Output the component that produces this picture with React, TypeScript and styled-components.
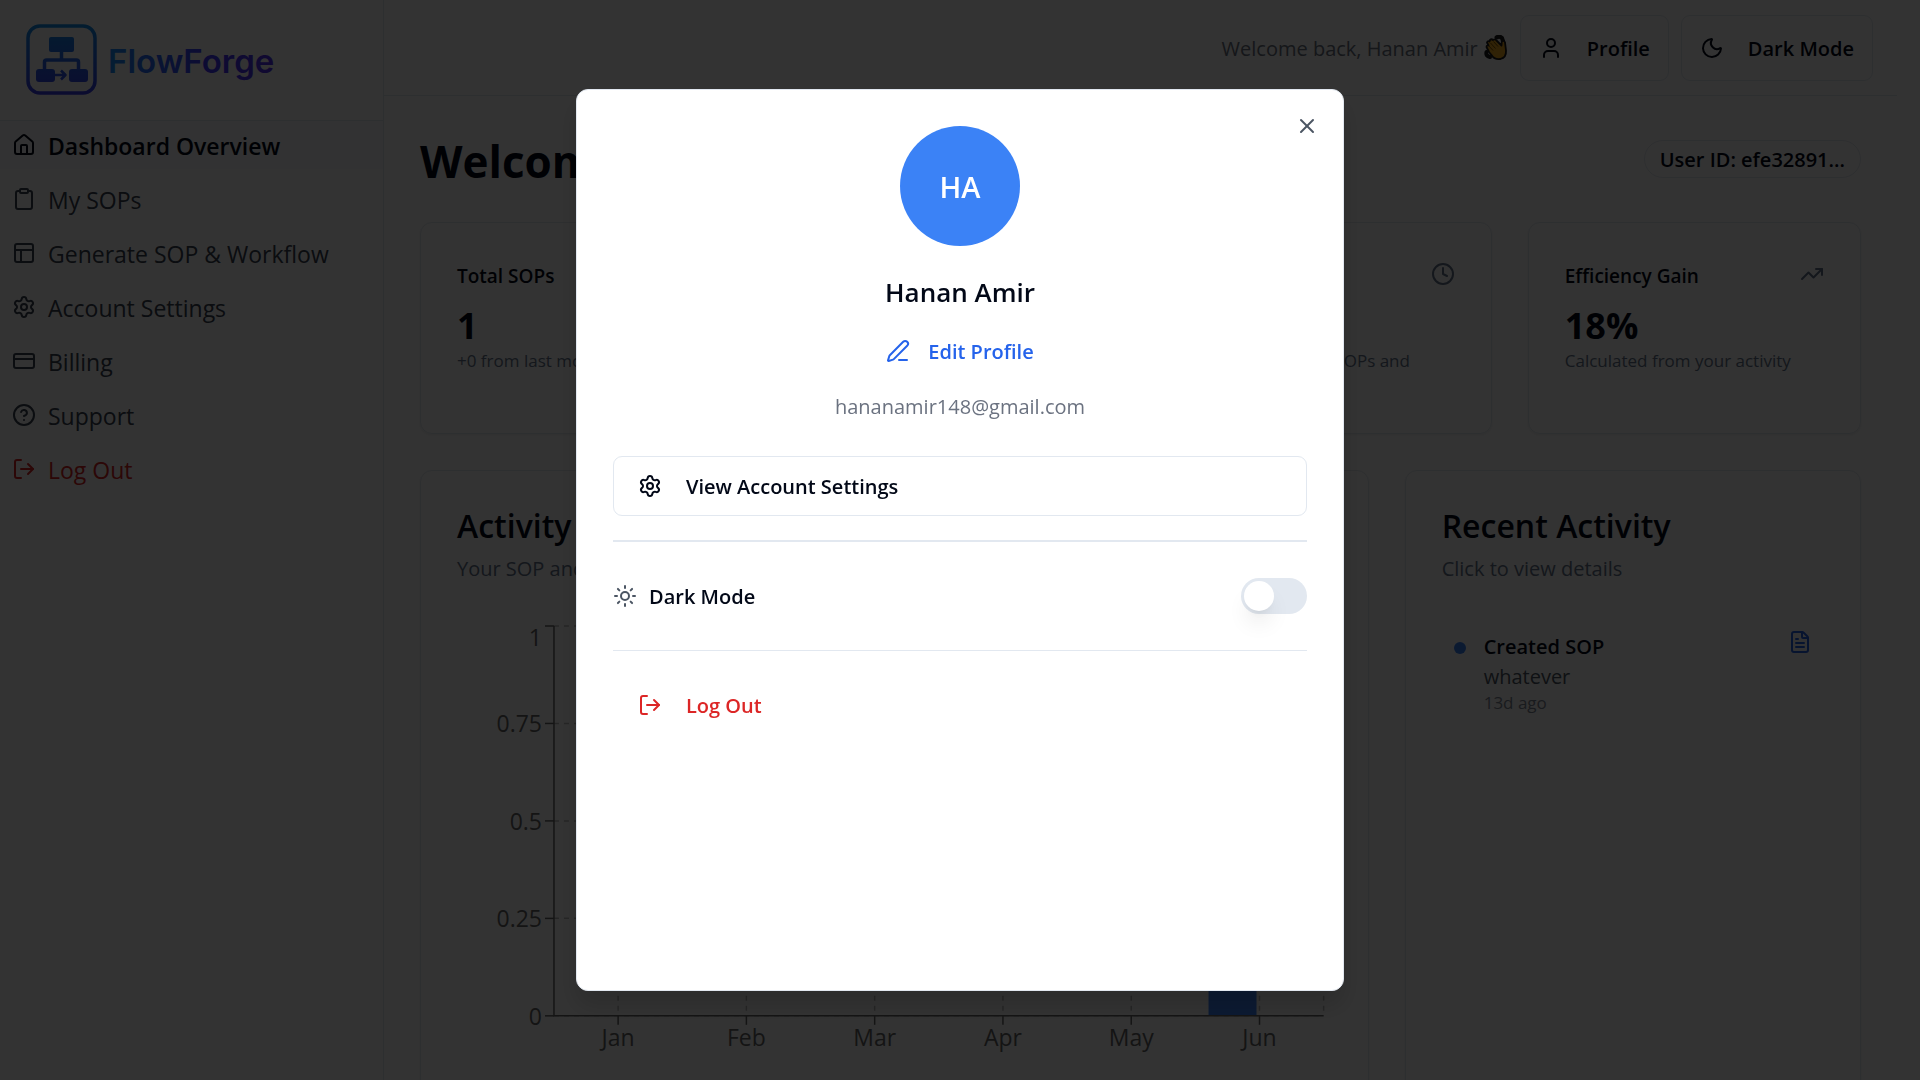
import React, { useId, useState } from "react";
import styled, { createGlobalStyle, css } from "styled-components";
import {
  House, Clipboard, PanelsTopLeft, Settings, CreditCard, CircleHelp, LogOut, User, Moon,
  Sun, Clock, TrendingUp, FileText, PenLine, X, CircleCheck, Workflow,
} from "lucide-react";

const c = {
  ink: "#020817",
  nav: "#374151",
  muted: "#64748b",
  gray: "#6b7280",
  soft: "#4b5563",
  line: "#e2e8f0",
  blue: "#3b82f6",
  link: "#2563eb",
  red: "#dc2626",
};

const GlobalStyle = createGlobalStyle`
  *, *::before, *::after { box-sizing: border-box; }
  body {
    margin: 0;
    color: ${c.ink};
    background: #fff;
    font-family: "Open Sans", "Noto Sans", sans-serif;
    font-size: 20px;
    line-height: 30px;
  }
  h1, h2, h3, p, ul { margin: 0; padding: 0; }
  ul { list-style: none; }
  button { font: inherit; color: inherit; background: none; border: 0; padding: 0; cursor: pointer; }
  a { color: inherit; text-decoration: none; }
  svg { flex: none; }
`;

const Shell = styled.div`
  display: flex;
  height: 100vh;
  overflow: hidden;
  padding-right: 23px;
`;

const Sidebar = styled.aside`
  flex: none;
  width: 384px;
  border-right: 1px solid ${c.line};
`;

const Brand = styled.div`
  display: flex;
  align-items: center;
  gap: 10px;
  height: 121px;
  padding: 0 26px;
  border-bottom: 1px solid ${c.line};
`;

const Nav = styled.nav`
  display: grid;
  gap: 6px;
`;

const Label = styled.span`
  padding-top: 2px;
`;

const NavItem = styled.a<{ $active?: boolean; $danger?: boolean }>`
  display: flex;
  align-items: center;
  gap: 12px;
  height: 48px;
  padding: 0 12px;
  font-size: 23px;
  color: ${(p) => (p.$danger ? c.red : p.$active ? c.ink : c.nav)};
  ${(p) => p.$active && css`
    font-weight: 600;
    background: #f8fafc;
  `}
`;

const Main = styled.div`
  flex: 1;
  min-width: 0;
`;

const TopBar = styled.header`
  display: flex;
  align-items: center;
  justify-content: flex-end;
  gap: 12px;
  height: 96px;
  padding: 0 24px;
  border-bottom: 1px solid ${c.line};
`;

const Greeting = styled.p`
  display: flex;
  align-items: center;
  gap: 6px;
  color: ${c.gray};
`;

const BarButton = styled.button`
  display: flex;
  align-items: center;
  gap: 24px;
  height: 66px;
  padding: 0 18px;
  border: 1px solid ${c.line};
  border-radius: 9px;
  font-weight: 600;
`;

const Content = styled.main`
  display: grid;
  gap: 36px;
  padding: 36px;
`;

const TitleRow = styled.div`
  display: flex;
  align-items: center;
  justify-content: space-between;
  height: 54px;
`;

const PageTitle = styled.h1`
  padding-top: 4px;
  font-size: 44px;
  line-height: 54px;
  font-weight: 700;
`;

const Badge = styled.span`
  padding: 4px 15px 2px;
  border: 1px solid ${c.line};
  border-radius: 19px;
  font-weight: 600;
`;

const Stats = styled.div`
  display: grid;
  grid-template-columns: repeat(4, 1fr);
  gap: 36px;
`;

const Panels = styled.div`
  display: grid;
  grid-template-columns: repeat(3, 1fr);
  gap: 36px;
`;

const Card = styled.section<{ $span?: number }>`
  grid-column: span ${(p) => p.$span ?? 1};
  min-width: 0;
  padding: 36px;
  border: 1px solid ${c.line};
  border-radius: 12px;
  box-shadow: 0 1px 3px rgba(0, 0, 0, 0.08);
`;

const StatHead = styled.div`
  display: flex;
  justify-content: space-between;
  margin-bottom: 10px;
  svg { color: ${c.muted}; margin-top: 3px; }
`;

const StatTitle = styled.h3`
  font-size: 19px;
  line-height: 34px;
  font-weight: 600;
`;

const StatValue = styled.div`
  font-size: 36px;
  line-height: 46px;
  font-weight: 700;
`;

const StatNote = styled.p`
  font-size: 17px;
  line-height: 24px;
  color: ${c.muted};
`;

const PanelTitle = styled.h2`
  font-size: 32px;
  line-height: 38px;
  font-weight: 600;
`;

const PanelNote = styled.p`
  margin-top: 9px;
  color: ${c.muted};
`;

const Chart = styled.svg`
  display: block;
  width: 100%;
  height: auto;
  margin-top: 32px;
  font-size: 23px;
`;

const Activity = styled.li`
  display: flex;
  align-items: flex-start;
  gap: 18px;
  margin-top: 34px;
  padding: 12px;
  svg { color: ${c.link}; }
`;

const Dot = styled.span`
  flex: none;
  width: 12px;
  height: 12px;
  margin-top: 12px;
  border-radius: 50%;
  background: ${c.blue};
`;

const ActivityBody = styled.div`
  flex: 1;
  padding-top: 2px;
`;

const ActivityName = styled.p`
  font-weight: 600;
`;

const ActivityDetail = styled.p`
  color: ${c.soft};
`;

const ActivityTime = styled.p`
  font-size: 17px;
  line-height: 22px;
  color: #7f8795;
`;

const Overlay = styled.div`
  position: fixed;
  inset: 0;
  display: grid;
  place-items: center;
  background: rgba(0, 0, 0, 0.8);
`;

const Dialog = styled.div`
  position: relative;
  display: flex;
  flex-direction: column;
  width: 768px;
  max-width: 100%;
  height: calc(100vh - 178px);
  padding: 36px;
  border: 1px solid ${c.line};
  border-radius: 12px;
  background: #fff;
  box-shadow: 0 15px 23px rgba(0, 0, 0, 0.15);
`;

const CloseButton = styled.button`
  position: absolute;
  top: 24px;
  right: 24px;
  width: 24px;
  height: 24px;
  color: ${c.soft};
`;

const Identity = styled.div`
  display: flex;
  flex-direction: column;
  align-items: center;
`;

const Avatar = styled.div`
  display: grid;
  place-items: center;
  width: 120px;
  height: 120px;
  border-radius: 50%;
  background: ${c.blue};
  color: #fff;
  font-size: 29px;
  font-weight: 600;
`;

const FullName = styled.h2`
  margin-top: 29px;
  font-size: 26px;
  line-height: 34px;
  font-weight: 600;
`;

const EditLink = styled.button`
  display: flex;
  align-items: center;
  gap: 18px;
  height: 30px;
  margin-top: 27px;
  color: ${c.link};
  font-weight: 600;
`;

const Email = styled.p`
  margin-top: 26px;
  color: ${c.gray};
`;

const ActionButton = styled.button<{ $outline?: boolean; $danger?: boolean }>`
  display: flex;
  align-items: center;
  gap: 24px;
  height: 60px;
  padding: 0 24px;
  border: 1px solid ${(p) => (p.$outline ? c.line : "transparent")};
  border-radius: 9px;
  font-weight: 600;
  color: ${(p) => (p.$danger ? c.red : c.ink)};
`;

const Divider = styled.hr<{ $thick?: boolean }>`
  width: 100%;
  height: ${(p) => (p.$thick ? 2 : 1)}px;
  margin: 0;
  border: 0;
  background: ${c.line};
`;

const Options = styled.div`
  display: flex;
  flex-direction: column;
  gap: 24px;
  margin-top: 34px;
`;

const ThemeRow = styled.div`
  display: flex;
  align-items: center;
  gap: 12px;
  height: 60px;
  svg { color: ${c.soft}; }
`;

const ThemeLabel = styled.label`
  flex: 1;
  padding-top: 2px;
  font-weight: 600;
`;

const Switch = styled.input`
  appearance: none;
  display: flex;
  align-items: center;
  width: 66px;
  height: 36px;
  margin: 0;
  padding: 3px;
  border-radius: 18px;
  background: ${c.line};
  cursor: pointer;
  &::before {
    content: "";
    width: 30px;
    height: 30px;
    border-radius: 50%;
    background: #fff;
    box-shadow: 0 15px 22px -4px rgba(0, 0, 0, 0.1), 0 6px 9px -6px rgba(0, 0, 0, 0.1);
  }
  &:checked { justify-content: flex-end; background: ${c.ink}; }
`;

const WordMark = styled.svg`
  display: block;
  font-family: "Inter", sans-serif;
  font-size: 33px;
  font-weight: 600;
`;

function Logo() {
  return (
    <>
      <svg width="72" height="72" viewBox="0 0 72 72" fill="none" aria-hidden="true">
        <defs>
          <linearGradient id="mark" x1="0" y1="0" x2="0" y2="72" gradientUnits="userSpaceOnUse">
            <stop stopColor="#1290e8" />
            <stop offset="1" stopColor="#3a3ae8" />
          </linearGradient>
        </defs>
        <g stroke="url(#mark)" strokeWidth="3.500">
          <rect x="2" y="2" width="67" height="67" rx="12" />
          <path d="M35.500 27v9M18.500 46V38q0-2 2-2h30q2 0 2 2v8" />
          <path d="M28 51h10M35 46.500l4.500 4.500-4.500 4.500" strokeWidth="2.500" strokeLinejoin="round" />
        </g>
        <g fill="url(#mark)">
          <rect x="23" y="13" width="25" height="15" rx="2" />
          <rect x="10" y="45" width="19" height="13" rx="3" />
          <rect x="43" y="45" width="19" height="13" rx="3" />
        </g>
      </svg>
      <WordMark width="176" height="48" role="img" aria-label="FlowForge">
        <defs>
          <linearGradient id="word">
            <stop stopColor="#1a90ff" />
            <stop offset="0.6" stopColor="#4038ff" />
            <stop offset="1" stopColor="#5530f0" />
          </linearGradient>
        </defs>
        <text x="0" y="37" fill="url(#word)">FlowForge</text>
      </WordMark>
    </>
  );
}

function WavingHand() {
  return (
    <svg width="24" height="26" viewBox="0 0 24 26" role="img" aria-label="Waving hand">
      <path d="M12.500 2.500q3-2 5.500.5l1 3M2.500 17q-1 4 3.500 5" fill="none" stroke="#1a1a1a" strokeWidth="4" strokeLinecap="round" />
      <path d="M5 17 2.500 12q0-2 2-1.500L3 7.500q.5-2 2.500-1L6 5q1.500-1.500 3 0l1-.5q1.500-.5 2.500 1l5 5 .3-4q2-1.500 3.200.8l1 8.200q.5 7-5.500 8.500-6 1-9-4Z" fill="#f0a91e" stroke="#1a1a1a" strokeWidth="1.800" strokeLinejoin="round" />
      <path d="m5 11 4 4.500M6.500 8l5 5.500M9.500 6.500l4.500 5" fill="none" stroke="#7a5200" strokeWidth="1" />
    </svg>
  );
}

const months = ["Jan", "Feb", "Mar", "Apr", "May", "Jun"];
const counts = [0, 0, 0, 0, 0, 1];
const levels = [0, 0.25, 0.5, 0.75, 1];
const plot = { left: 97, right: 867, top: 10, bottom: 400 };

function ActivityChart() {
  const band = (plot.right - plot.left) / months.length;
  const y = (v: number) => plot.bottom - v * (plot.bottom - plot.top);
  const mid = (i: number) => plot.left + band * (i + 0.5);
  return (
    <Chart viewBox="0 0 875 450" role="img" aria-label="SOPs created per month">
      <g stroke="#bbb" strokeWidth="1.500" strokeDasharray="5 5">
        {levels.map((v) => <line key={v} x1={plot.left} x2={plot.right} y1={y(v)} y2={y(v)} />)}
        {months.map((m, i) => <line key={m} x1={mid(i)} x2={mid(i)} y1={plot.top} y2={plot.bottom} />)}
        <line x1={plot.right} x2={plot.right} y1={plot.top} y2={plot.bottom} />
      </g>
      {counts.map((n, i) => n > 0 && (
        <rect key={i} x={mid(i) - 51} y={y(n)} width="48" height={plot.bottom - y(n)} fill={c.blue} />
      ))}
      <g stroke="#666" strokeWidth="1.500">
        <path d={`M${plot.left} ${plot.top}V${plot.bottom}H${plot.right}`} fill="none" />
        {levels.map((v) => <line key={v} x1={plot.left - 9} x2={plot.left} y1={y(v)} y2={y(v)} />)}
        {months.map((m, i) => <line key={m} x1={mid(i)} x2={mid(i)} y1={plot.bottom} y2={plot.bottom + 9} />)}
      </g>
      <g fill="#666">
        {levels.map((v) => (
          <text key={v} x={plot.left - 12} y={y(v) + (v === 1 ? 20 : 9)} textAnchor="end">{v}</text>
        ))}
        {months.map((m, i) => (
          <text key={m} x={mid(i)} y={plot.bottom + 30} textAnchor="middle">{m}</text>
        ))}
      </g>
    </Chart>
  );
}

const nav = [
  { label: "Dashboard Overview", icon: House, active: true },
  { label: "My SOPs", icon: Clipboard },
  { label: "Generate SOP & Workflow", icon: PanelsTopLeft },
  { label: "Account Settings", icon: Settings },
  { label: "Billing", icon: CreditCard },
  { label: "Support", icon: CircleHelp },
  { label: "Log Out", icon: LogOut, danger: true },
];

const stats = [
  { title: "Total SOPs", value: "1", note: "+0 from last month", icon: CircleCheck },
  { title: "Flows", value: "1", note: "+0", icon: Workflow },
  { title: "Time Saved", value: "2h", note: "Estimated across SOPs and workflows", icon: Clock },
  { title: "Efficiency Gain", value: "18%", note: "Calculated from your activity", icon: TrendingUp },
];

function ProfileDialog({ onClose }: { onClose: () => void }) {
  const switchId = useId();
  const nameId = useId();
  return (
    <Overlay>
      <Dialog role="dialog" aria-modal="true" aria-labelledby={nameId}>
        <CloseButton type="button" aria-label="Close" onClick={onClose}><X size={24} /></CloseButton>
        <Identity>
          <Avatar><Label>HA</Label></Avatar>
          <FullName id={nameId}>Hanan Amir</FullName>
          <EditLink type="button"><PenLine size={24} /><Label>Edit Profile</Label></EditLink>
          <Email>hananamir148@gmail.com</Email>
        </Identity>
        <Options>
          <ActionButton type="button" $outline><Settings size={24} /><Label>View Account Settings</Label></ActionButton>
          <Divider $thick />
          <ThemeRow>
            <Sun size={24} />
            <ThemeLabel htmlFor={switchId}>Dark Mode</ThemeLabel>
            <Switch id={switchId} type="checkbox" role="switch" />
          </ThemeRow>
          <Divider />
          <ActionButton type="button" $danger><LogOut size={24} /><Label>Log Out</Label></ActionButton>
        </Options>
      </Dialog>
    </Overlay>
  );
}

export default function App() {
  const [open, setOpen] = useState(true);
  return (
    <>
      <GlobalStyle />
      <Shell>
        <Sidebar>
          <Brand><Logo /></Brand>
          <Nav>
            {nav.map(({ label, icon: Icon, active, danger }) => (
              <NavItem key={label} href="#" $active={active} $danger={danger}>
                <Icon size={24} /><Label>{label}</Label>
              </NavItem>
            ))}
          </Nav>
        </Sidebar>
        <Main>
          <TopBar>
            <Greeting><Label>Welcome back, Hanan Amir</Label><WavingHand /></Greeting>
            <BarButton type="button" onClick={() => setOpen(true)}><User size={24} /><Label>Profile</Label></BarButton>
            <BarButton type="button"><Moon size={24} /><Label>Dark Mode</Label></BarButton>
          </TopBar>
          <Content>
            <TitleRow>
              <PageTitle>Welcome back</PageTitle>
              <Badge>User ID: efe32891...</Badge>
            </TitleRow>
            <Stats>
              {stats.map(({ title, value, note, icon: Icon }) => (
                <Card key={title}>
                  <StatHead><StatTitle>{title}</StatTitle><Icon size={24} /></StatHead>
                  <StatValue>{value}</StatValue>
                  <StatNote>{note}</StatNote>
                </Card>
              ))}
            </Stats>
            <Panels>
              <Card $span={2}>
                <PanelTitle>Activity</PanelTitle>
                <PanelNote>Your SOP and workflow activity</PanelNote>
                <ActivityChart />
              </Card>
              <Card>
                <PanelTitle>Recent Activity</PanelTitle>
                <PanelNote>Click to view details</PanelNote>
                <ul>
                  <Activity>
                    <Dot />
                    <ActivityBody>
                      <ActivityName>Created SOP</ActivityName>
                      <ActivityDetail>whatever</ActivityDetail>
                      <ActivityTime>13d ago</ActivityTime>
                    </ActivityBody>
                    <FileText size={24} />
                  </Activity>
                </ul>
              </Card>
            </Panels>
          </Content>
        </Main>
      </Shell>
      {open && <ProfileDialog onClose={() => setOpen(false)} />}
    </>
  );
}
